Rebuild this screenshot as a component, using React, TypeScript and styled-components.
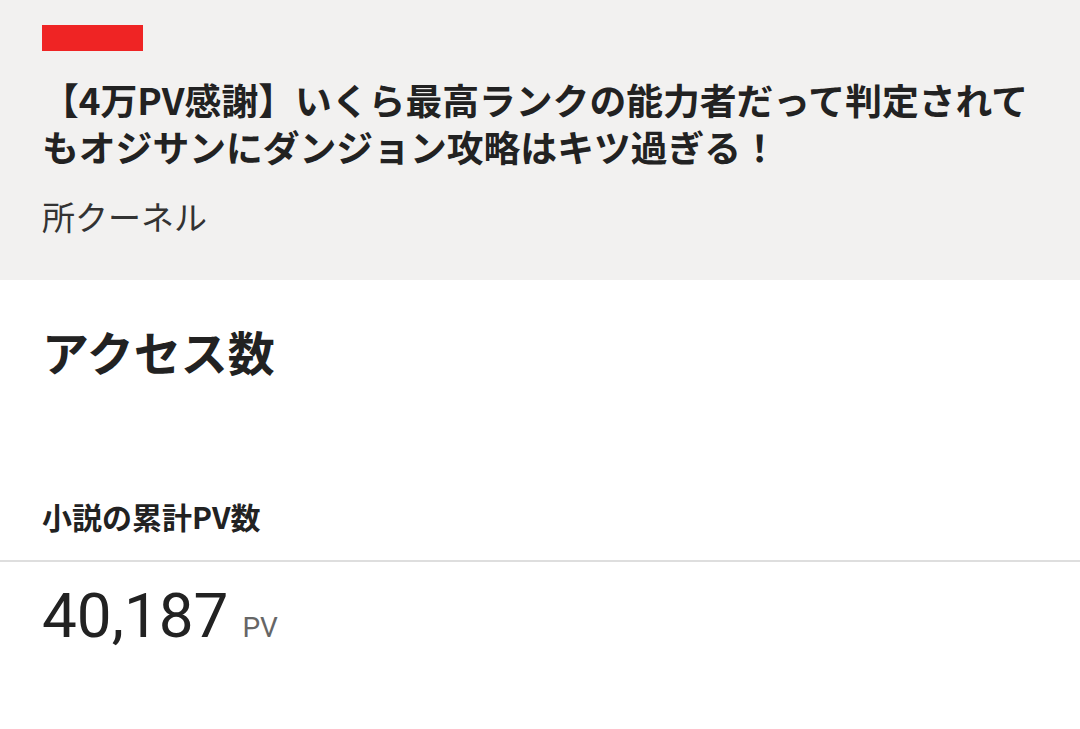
import React from "react";
import styled, { createGlobalStyle } from "styled-components";

const Global = createGlobalStyle`
  html, body { margin: 0; padding: 0; background: #ffffff; }
  body { font-family: "Noto Sans CJK JP", "Noto Sans", sans-serif; color: #222; }
`;

const Page = styled.div`
  width: 1080px;
  display: flex;
  flex-direction: column;
`;

const Header = styled.header`
  background: #f2f1f0;
  height: 280px;
  box-sizing: border-box;
  padding: 25px 42px 0 42px;
  display: flex;
  flex-direction: column;
`;

const RedBar = styled.div`
  width: 101px;
  height: 26px;
  background: #ef2424;
`;

const Title = styled.h1`
  margin: 25px 0 0 0;
  font-size: 36.8px;
  line-height: 47px;
  font-weight: 700;
  color: #222;
  letter-spacing: 0;
`;

const Author = styled.div`
  margin-top: 22px;
  font-size: 33px;
  line-height: 48px;
  font-weight: 400;
  color: #333;
`;

const Section = styled.section`
  padding: 39px 42px 0 42px;
`;

const SectionTitle = styled.h2`
  margin: 0;
  font-size: 47px;
  line-height: 64px;
  font-weight: 700;
  color: #222;
`;

const StatLabel = styled.div`
  margin-top: 112px;
  padding: 0 42px;
  font-size: 30px;
  line-height: 42px;
  font-weight: 700;
  color: #222;
  height: 67px;
  box-sizing: border-box;
  border-bottom: 2px solid #dedede;
`;

const StatValue = styled.div`
  padding: 18px 42px 0 42px;
  display: flex;
  align-items: baseline;
  gap: 14px;
`;

const Number = styled.span`
  font-family: Roboto, "Noto Sans", sans-serif;
  font-size: 62px;
  line-height: 72px;
  color: #222;
`;

const Unit = styled.span`
  font-family: Roboto, "Noto Sans", sans-serif;
  font-size: 28px;
  color: #666;
`;

export default function App() {
  return (
    <Page>
      <Global />
      <Header>
        <RedBar />
        <Title>【4万PV感謝】いくら最高ランクの能力者だって判定されてもオジサンにダンジョン攻略はキツ過ぎる！</Title>
        <Author>所クーネル</Author>
      </Header>
      <Section>
        <SectionTitle>アクセス数</SectionTitle>
      </Section>
      <StatLabel>小説の累計PV数</StatLabel>
      <StatValue>
        <Number>40,187</Number>
        <Unit>PV</Unit>
      </StatValue>
    </Page>
  );
}
